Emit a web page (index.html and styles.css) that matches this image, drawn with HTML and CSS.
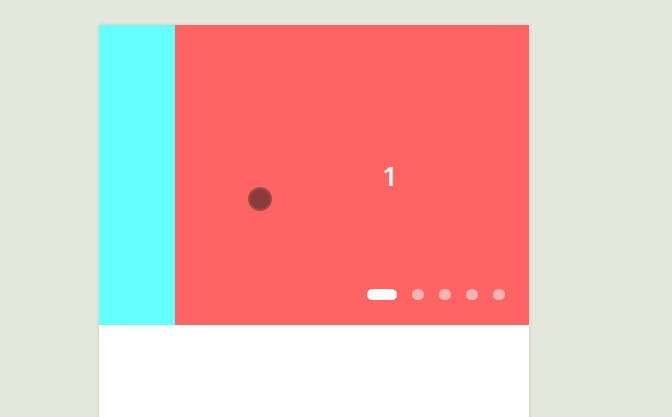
FILE: index.html
```html
<!DOCTYPE html>
<html>
<head>
<meta charset="utf-8">
<link rel="stylesheet" href="styles.css">
</head>
<body>
<div class="card">
  <div class="carousel">
    <div class="track">
      <div class="slide slide-prev"></div>
      <div class="slide slide-cur"><span class="num">1</span></div>
    </div>
    <div class="touch"></div>
    <div class="dots">
      <span class="dot active"></span>
      <span class="dot"></span>
      <span class="dot"></span>
      <span class="dot"></span>
      <span class="dot"></span>
    </div>
  </div>
  <div class="body"></div>
</div>
</body>
</html>
```
FILE: styles.css
```css
html, body {
  margin: 0;
  padding: 0;
}
body {
  background: #e2e9da;
  font-family: "Open Sans", "Liberation Sans", sans-serif;
  padding: 25px 0 0 99px;
  height: 417px;
  box-sizing: border-box;
  overflow: hidden;
}
.card {
  width: 430px;
  height: 520px;
  background: #ffffff;
  box-shadow: 0 0 4px rgba(0, 0, 0, 0.12);
}
.carousel {
  position: relative;
  width: 430px;
  height: 300px;
  overflow: hidden;
}
.track {
  display: flex;
  height: 100%;
  transform: translateX(-354px);
}
.slide {
  flex: 0 0 430px;
  height: 300px;
  display: flex;
  align-items: center;
  justify-content: center;
}
.slide-prev {
  background: #66ffff;
}
.slide-cur {
  background: #ff6464;
}
.num {
  color: #ffffff;
  font-size: 27px;
  font-weight: 600;
  line-height: 1;
}
.touch {
  position: absolute;
  left: 149px;
  top: 162px;
  width: 20px;
  height: 20px;
  border-radius: 50%;
  background: #8a3c3c;
  border: 2px solid #a24a4a;
}
.dots {
  position: absolute;
  right: 24px;
  bottom: 25px;
  display: flex;
  align-items: center;
  gap: 15px;
}
.dot {
  width: 12px;
  height: 11px;
  border-radius: 6px;
  background: rgba(255, 255, 255, 0.5);
}
.dot.active {
  width: 30px;
  background: #ffffff;
}
```
